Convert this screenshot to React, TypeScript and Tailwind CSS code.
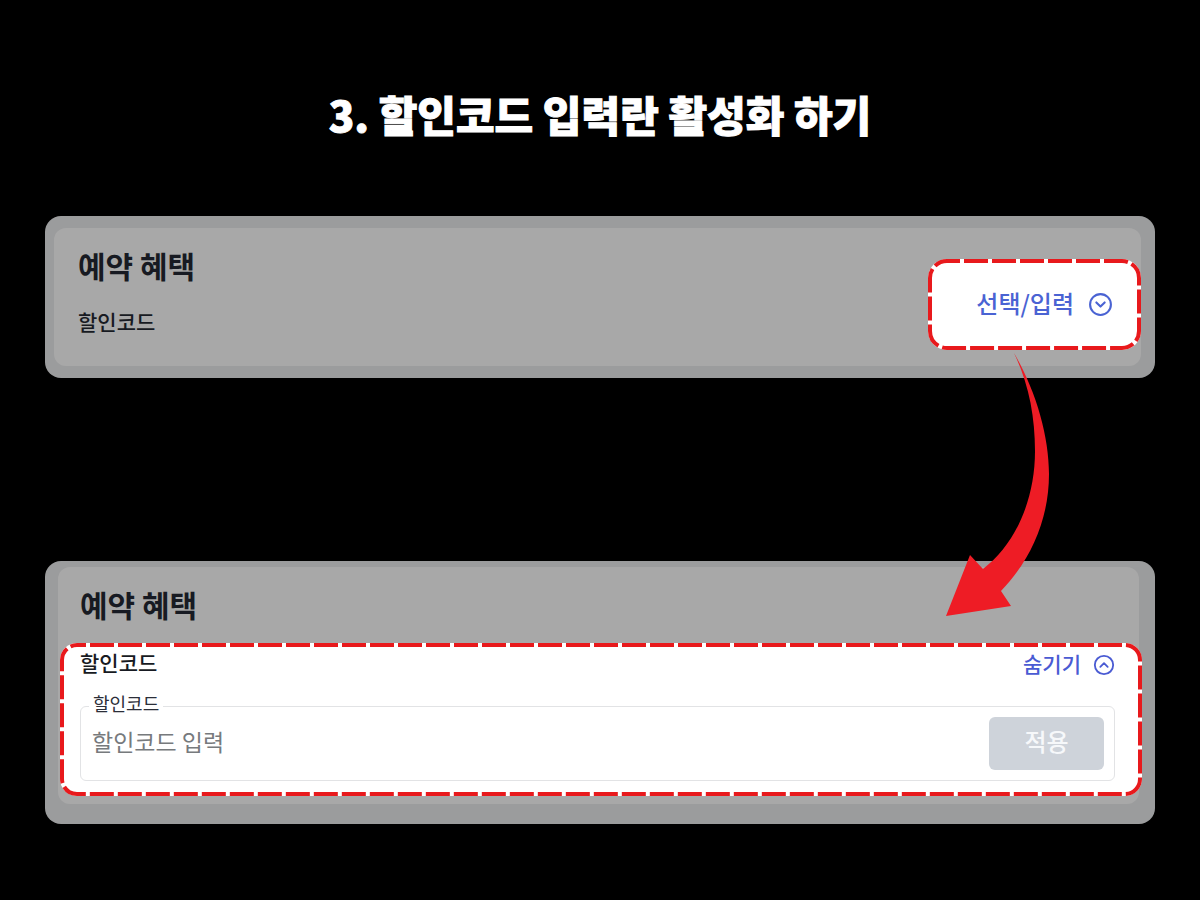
import { useState, type ReactNode } from 'react';
import { CircleChevronDown, CircleChevronUp } from 'lucide-react';

interface HighlightProps {
  className: string;
  radius: number;
  dashOffset: number;
  children: ReactNode;
}

// White cut-out with a dashed red outline
function Highlight({ className, radius, dashOffset, children }: HighlightProps) {
  return (
    <div className={`relative bg-white ${className}`}>
      <svg className="pointer-events-none absolute inset-0 h-full w-full" aria-hidden="true">
        <rect
          x="2"
          y="2"
          rx={radius}
          className="h-[calc(100%-4px)] w-[calc(100%-4px)]"
          fill="none"
          stroke="#e8191c"
          strokeWidth="4"
          strokeDasharray="24 4"
          strokeDashoffset={dashOffset}
        />
      </svg>
      {children}
    </div>
  );
}

function CurvedArrow() {
  return (
    <svg
      className="pointer-events-none absolute top-[137px] right-[105px] h-[264px] w-[105px]"
      viewBox="945 353 105 264"
      aria-hidden="true"
    >
      <path
        d="M1014 353C1036 391 1049 436 1049 474C1049 519 1031 560 1001 591L1011 606L946 616L970 555L983 569C1016 544 1035 499 1035 451C1035 417 1029 384 1014 353Z"
        fill="#ee1c25"
      />
    </svg>
  );
}

export default function App() {
  const [code, setCode] = useState('');

  return (
    <main className="min-h-screen bg-black px-[45px] pt-[84px] pb-[76px] font-['Noto_Sans_CJK_KR',sans-serif] text-[#171a22]">
      <h1 className="text-center text-[42px] leading-[60px] font-black text-white [-webkit-text-stroke:1px_white]">
        3. 할인코드 입력란 활성화 하기
      </h1>

      <div className="relative mt-[72px] flex flex-col gap-[183px]">
        {/* Collapsed */}
        <section className="rounded-2xl bg-[#9b9c9d] pt-3 pr-[14px] pb-3 pl-[9px]">
          <div className="flex justify-between rounded-xl bg-[#a8a8a8] pb-4 pl-6">
            <div className="pt-[17px]">
              <h2 className="text-[30px] leading-10 font-bold">예약 혜택</h2>
              <p className="mt-[22px] text-[21px] leading-7 font-medium">할인코드</p>
            </div>
            <Highlight
              className="mt-[31px] flex h-[91px] w-[213px] items-center justify-end rounded-[19px] pr-7"
              radius={17}
              dashOffset={11}
            >
              <button type="button" className="flex items-center gap-[14px] text-2xl font-medium text-[#4a63d3]">
                <span className="pb-[3px]">선택/입력</span>
                <CircleChevronDown size={25} />
              </button>
            </Highlight>
          </div>
        </section>

        {/* Expanded */}
        <section className="rounded-2xl bg-[#9b9c9d] pt-[6px] pr-4 pb-5 pl-[13px]">
          <div className="rounded-xl bg-[#a8a8a8] pt-[17px] pb-2">
            <h2 className="pl-[22px] text-[30px] leading-10 font-bold">예약 혜택</h2>
            <Highlight
              className="mt-[19px] -mr-[3px] ml-[2px] rounded-[17px] pt-[3px] pr-[27px] pb-[15px] pl-5"
              radius={15}
              dashOffset={15}
            >
              <div className="flex items-center justify-between">
                <p className="pb-[3px] text-[21px] leading-7 font-medium">할인코드</p>
                <button
                  type="button"
                  className="flex items-center gap-3 pt-[3px] text-[21px] leading-7 font-medium text-[#4a5bd3]"
                >
                  <span className="pb-[3px]">숨기기</span>
                  <CircleChevronUp size={22} />
                </button>
              </div>
              <div className="relative mt-[26px] flex items-center rounded-md border border-[#e2e3e5] py-[10px] pr-[10px] pl-[11px]">
                <label
                  htmlFor="discount-code"
                  className="absolute -top-[18px] left-2 bg-white px-1 text-lg leading-7 text-[#2b2e38]"
                >
                  할인코드
                </label>
                <input
                  id="discount-code"
                  type="text"
                  value={code}
                  onChange={(e) => setCode(e.target.value)}
                  placeholder="할인코드 입력"
                  className="min-w-0 flex-1 pb-[6px] text-[23px] leading-8 outline-none placeholder:text-[#777a7d]"
                />
                <button
                  type="button"
                  className="h-[53px] w-[115px] rounded-md bg-[#ced3da] pb-[6px] text-2xl font-medium text-[#f6f8fa]"
                >
                  적용
                </button>
              </div>
            </Highlight>
          </div>
        </section>

        <CurvedArrow />
      </div>
    </main>
  );
}
